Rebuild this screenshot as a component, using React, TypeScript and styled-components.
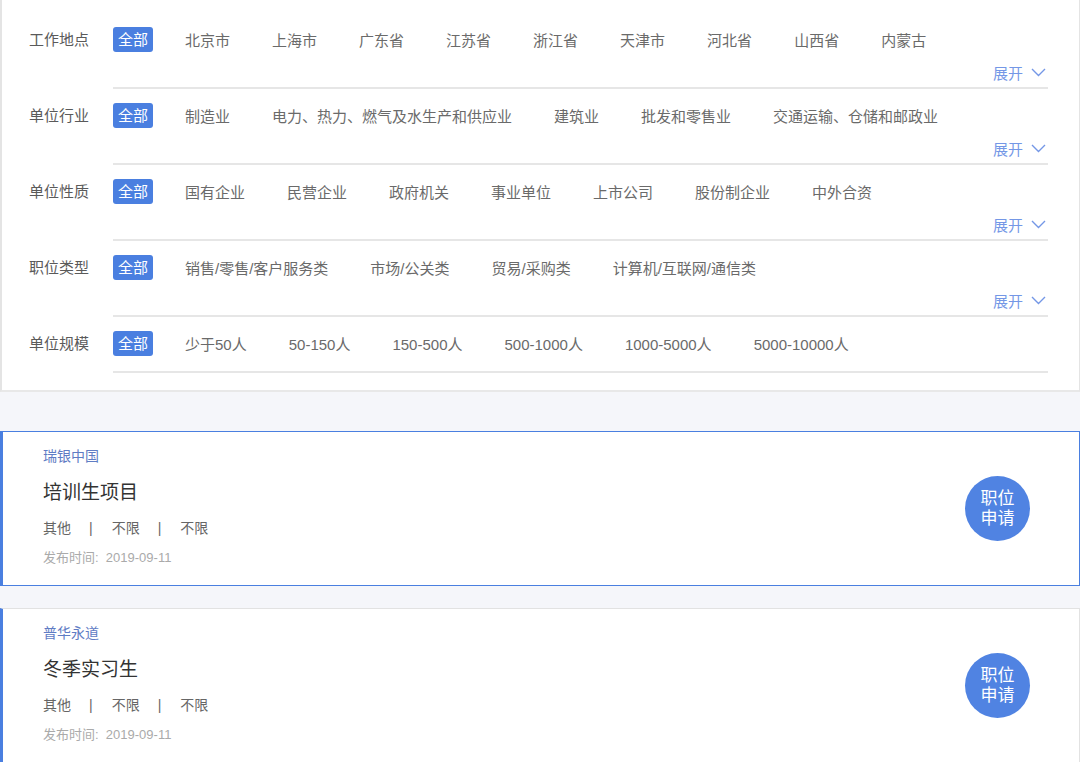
import { createGlobalStyle } from 'styled-components';
import styled from 'styled-components';

const GlobalStyle = createGlobalStyle`
  html, body {
    margin: 0;
    padding: 0;
    background: #f5f6fa;
    font-family: "Liberation Sans", "Noto Sans CJK SC", sans-serif;
  }
  * { box-sizing: border-box; }
`;

type FilterRow = { label: string; options: string[]; expandable: boolean };

const filters: FilterRow[] = [
  {
    label: '工作地点',
    options: ['北京市', '上海市', '广东省', '江苏省', '浙江省', '天津市', '河北省', '山西省', '内蒙古'],
    expandable: true,
  },
  {
    label: '单位行业',
    options: ['制造业', '电力、热力、燃气及水生产和供应业', '建筑业', '批发和零售业', '交通运输、仓储和邮政业'],
    expandable: true,
  },
  {
    label: '单位性质',
    options: ['国有企业', '民营企业', '政府机关', '事业单位', '上市公司', '股份制企业', '中外合资'],
    expandable: true,
  },
  {
    label: '职位类型',
    options: ['销售/零售/客户服务类', '市场/公关类', '贸易/采购类', '计算机/互联网/通信类'],
    expandable: true,
  },
  {
    label: '单位规模',
    options: ['少于50人', '50-150人', '150-500人', '500-1000人', '1000-5000人', '5000-10000人'],
    expandable: false,
  },
];

const jobs = [
  { company: '瑞银中国', title: '培训生项目', tags: ['其他', '不限', '不限'], date: '2019-09-11', active: true },
  { company: '普华永道', title: '冬季实习生', tags: ['其他', '不限', '不限'], date: '2019-09-11', active: false },
];

function Chevron() {
  return (
    <svg width="15" height="9" viewBox="0 0 15 9" fill="none">
      <polyline points="1,1 7.5,7.5 14,1" stroke="#7497e6" strokeWidth="1.4" />
    </svg>
  );
}

export default function App() {
  return (
    <>
      <GlobalStyle />
      <Panel>
        {filters.map((row) => (
          <Row key={row.label}>
            <Label>{row.label}</Label>
            <RowBody>
              <Options>
                <AllBadge>全部</AllBadge>
                {row.options.map((opt) => (
                  <Option key={opt}>{opt}</Option>
                ))}
              </Options>
              {row.expandable ? (
                <ExpandLine>
                  <Expand>
                    展开
                    <Chevron />
                  </Expand>
                </ExpandLine>
              ) : (
                <Spacer />
              )}
            </RowBody>
          </Row>
        ))}
      </Panel>
      <JobList>
        {jobs.map((job) => (
          <Card key={job.company} $active={job.active}>
            <CardInfo>
              <Company>{job.company}</Company>
              <Title>{job.title}</Title>
              <Meta>
                {job.tags.map((t, i) => (
                  <span key={i}>
                    {i > 0 && <Sep>|</Sep>}
                    {t}
                  </span>
                ))}
              </Meta>
              <DateText>发布时间:&nbsp; {job.date}</DateText>
            </CardInfo>
            <ApplyButton>
              职位
              <br />
              申请
            </ApplyButton>
          </Card>
        ))}
      </JobList>
    </>
  );
}

const Panel = styled.div`
  background: #fff;
  border-left: 2px solid #e4e4e4;
  border-right: 1px solid #e4e4e4;
  border-bottom: 2px solid #e8e8e8;
  padding: 13px 31px 17px 27px;
`;

const Row = styled.div`
  display: flex;
`;

const Label = styled.div`
  width: 84px;
  flex-shrink: 0;
  padding-top: 14px;
  line-height: 25px;
  font-size: 15px;
  color: #5a5a5a;
`;

const RowBody = styled.div`
  flex: 1;
  padding-top: 14px;
  border-bottom: 2px solid #e6e6e6;
`;

const Options = styled.div`
  display: flex;
  align-items: center;
  height: 25px;
  white-space: nowrap;
`;

const AllBadge = styled.span`
  display: inline-block;
  height: 25px;
  line-height: 25px;
  padding: 0 5px;
  border-radius: 3px;
  background: #4a7fe0;
  color: #fff;
  font-size: 15px;
  margin-right: 32px;
`;

const Option = styled.span`
  font-size: 15px;
  color: #6a6a6a;
  margin-right: 42px;
`;

const ExpandLine = styled.div`
  height: 35px;
  display: flex;
  justify-content: flex-end;
  align-items: flex-end;
  padding-bottom: 3px;
`;

const Expand = styled.span`
  display: flex;
  align-items: center;
  gap: 8px;
  font-size: 15px;
  line-height: 20px;
  color: #7497e6;
  margin-right: 2px;

  svg {
    margin-top: -3px;
  }
`;

const Spacer = styled.div`
  height: 15px;
`;

const JobList = styled.div`
  padding-top: 39px;
  display: flex;
  flex-direction: column;
  gap: 22px;
`;

const Card = styled.div<{ $active: boolean }>`
  display: flex;
  align-items: center;
  justify-content: space-between;
  height: 155px;
  background: #fff;
  border: 1px solid ${(p) => (p.$active ? '#4a7fe0' : '#e2e2e2')};
  border-left: 3px solid #4a7fe0;
  padding: 0 49px 0 40px;
`;

const CardInfo = styled.div`
  display: flex;
  flex-direction: column;
  margin-top: -5px;
`;

const Company = styled.div`
  font-size: 14px;
  line-height: 20px;
  color: #5f7cc4;
`;

const Title = styled.div`
  margin-top: 13px;
  font-size: 19px;
  line-height: 28px;
  color: #333;
`;

const Meta = styled.div`
  margin-top: 11px;
  font-size: 14px;
  line-height: 20px;
  color: #666;
`;

const Sep = styled.span`
  margin: 0 19px 0 18px;
`;

const DateText = styled.div`
  margin-top: 11px;
  font-size: 13px;
  line-height: 17px;
  color: #aaa;
`;

const ApplyButton = styled.div`
  width: 65px;
  height: 65px;
  border-radius: 50%;
  background: #5083e2;
  color: #fff;
  font-size: 17px;
  line-height: 20px;
  display: flex;
  align-items: center;
  justify-content: center;
  text-align: center;
  cursor: pointer;
`;
